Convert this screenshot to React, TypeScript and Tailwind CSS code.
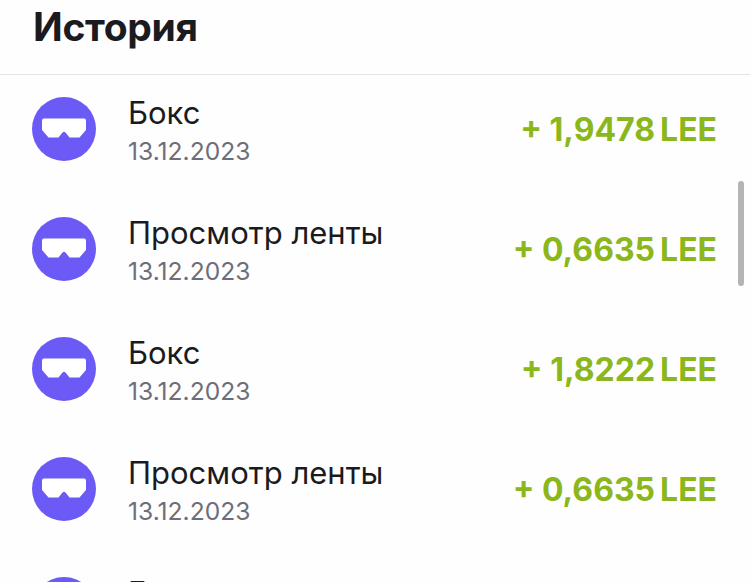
const rows = [
  { title: 'Бокс', amount: '+ 1,9478' },
  { title: 'Просмотр ленты', amount: '+ 0,6635' },
  { title: 'Бокс', amount: '+ 1,8222' },
  { title: 'Просмотр ленты', amount: '+ 0,6635' },
  { title: 'Бокс', amount: '+ 1,9478' },
];

const GogglesIcon = () => (
  <svg width="64" height="64" viewBox="0 0 64 64" className="shrink-0">
    <circle cx="32" cy="32" r="32" fill="#6c5af6" />
    <path
      d="M10 23.5 Q10 21.5 12 21.5 L52 21.5 Q54 21.5 54 23.5 L54 33 L47.5 40.5 L37.5 40.5 L33.5 35.5 Q32 34 30.5 35.5 L26.5 40.5 L16.5 40.5 L10 33 Z"
      fill="#ffffff"
    />
  </svg>
);

const App = () => {
  return (
    <div className="relative w-[750px] h-[582px] overflow-hidden bg-[#fefefe] font-['Inter',sans-serif]">
      <div className="h-[75px] border-b border-[#e4e4e6] pl-[33px] pt-[3px]">
        <h1 className="text-[39px] leading-[48px] font-bold tracking-[-0.3px] text-[#1b1b1f]">История</h1>
      </div>

      <div className="flex flex-col pt-[22px] pl-[32px] pr-[33px] gap-[56px]">
        {rows.map((row, i) => (
          <div key={i} className="flex items-center h-[64px]">
            <GogglesIcon />
            <div className="ml-[32px] flex flex-col pt-[6px]">
              <span className="text-[31px] leading-[38px] text-[#1b1b1f]">{row.title}</span>
              <span className="text-[24.6px] leading-[39px] text-[#6e6e7a]">13.12.2023</span>
            </div>
            <div className="ml-auto flex items-center gap-[5px] pt-[1px] text-[32px] leading-[40px] font-bold text-[#8ab71c]">
              <span>{row.amount}</span>
              <span>LEE</span>
            </div>
          </div>
        ))}
      </div>

      {/* scrollbar */}
      <div className="absolute left-[738px] top-[181px] w-[6px] h-[105px] rounded-full bg-[#b4b4b6]" />
    </div>
  );
};

export default App;
